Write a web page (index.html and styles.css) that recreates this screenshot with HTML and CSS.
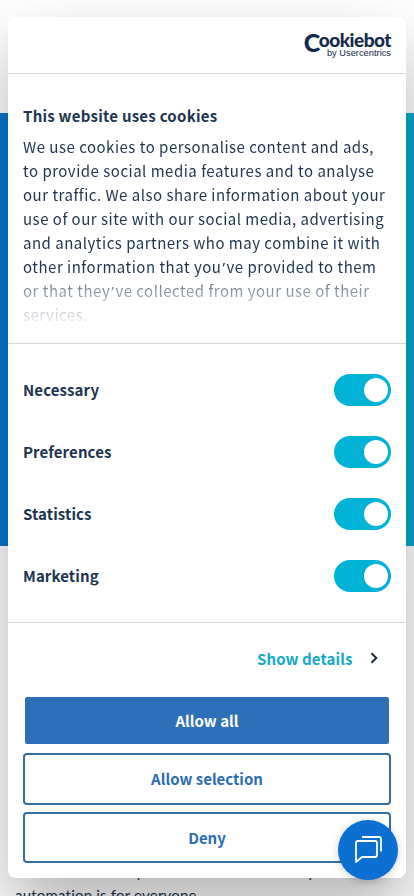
FILE: index.html
```html
<!DOCTYPE html>
<html lang="en">
<head>
<meta charset="utf-8">
<title>Cookie consent</title>
<link rel="stylesheet" href="styles.css">
</head>
<body>
<main class="page">
  <div class="hero"></div>
  <p class="copy">We believe in the products that make it easy<br>automation is for everyone.</p>
</main>
<section class="dialog">
  <header class="head">
    <div class="logo"><div class="brand"><span class="brand-c">C</span><span>ookiebot</span></div><div class="by">by Usercentrics</div></div>
  </header>
  <div class="intro">
    <h2>This website uses cookies</h2>
    <p>We use cookies to personalise content and ads,<br>to provide social media features and to analyse<br>our traffic. We also share information about your<br>use of our site with our social media, advertising<br>and analytics partners who may combine it with<br>other information that you<span class="apos">’</span>ve provided to them<br>or that they<span class="apos">’</span>ve collected from your use of their<br>services.</p>
  </div>
  <div class="options">
    <div class="option"><span>Necessary</span><i class="switch"></i></div>
    <div class="option"><span>Preferences</span><i class="switch"></i></div>
    <div class="option"><span>Statistics</span><i class="switch"></i></div>
    <div class="option"><span>Marketing</span><i class="switch"></i></div>
  </div>
  <div class="details"><a>Show details</a><svg width="8" height="12" viewBox="0 0 8 12"><path d="M1.500 1.200 6.300 6 1.500 10.800" fill="none" stroke="#1b2b3c" stroke-width="2"/></svg></div>
  <div class="buttons">
    <button class="primary">Allow all</button>
    <button>Allow selection</button>
    <button class="deny">Deny</button>
  </div>
</section>
<div class="chat"><svg width="60" height="60" viewBox="0 0 60 60" fill="none" stroke="#fff" stroke-width="1.800" stroke-linejoin="round"><path d="M20 21h17a2 2 0 0 1 2 2v12a2 2 0 0 1-2 2H24l-6 5V23a2 2 0 0 1 2-2z"/><path d="M24 17h17a2 2 0 0 1 2 2v12.500"/></svg></div>
</body>
</html>
```
FILE: styles.css
```css
* { box-sizing: border-box; }
body {
  margin: 0;
  height: 896px;
  overflow: hidden;
  background: #fff;
  color: #141414;
  font-family: "Noto Sans CJK SC", "Noto Sans", sans-serif;
  font-size: 15px;
}
.page { padding-top: 113px; height: 896px; overflow: hidden; }
.hero { height: 433px; background: linear-gradient(90deg, #0976d2 0 50%, #02abd0 50%); }
.copy { margin: 313px 0 0 15px; font: 15px/24px Lato, sans-serif; color: #18304f; white-space: nowrap; letter-spacing: .2px; }
.dialog {
  position: absolute;
  top: 17px;
  left: 8px;
  width: 398px;
  height: 861px;
  background: #fff;
  border-radius: 8px;
  box-shadow: 0 32px 68px rgba(0, 0, 0, .3);
  color: #1c3450;
}
.head { height: 57px; border-bottom: 1px solid #d6d6d6; display: flex; justify-content: flex-end; padding: 12px 15px 0 0; }
.logo { color: #14284a; text-align: right; white-space: nowrap; }
.brand { height: 18px; display: flex; justify-content: flex-end; font: 900 19px/22px Lato, sans-serif; letter-spacing: -.5px; }
.brand-c { font-size: 25px; line-height: 27px; margin-right: -1px; }
.by { font: 9.3px/10px "Liberation Sans", sans-serif; margin-top: 1px; }
.intro { height: 270px; padding: 30px 15px 0; border-bottom: 1px solid #d6d6d6; }
h2 { margin: 0 0 7px; font-size: 15px; line-height: 24px; letter-spacing: .25px; }
.intro p {
  margin: 0;
  line-height: 24px;
  letter-spacing: .5px;
  white-space: nowrap;
  -webkit-mask-image: linear-gradient(#000 0 140px, rgba(0, 0, 0, .55) 154px, rgba(0, 0, 0, .2) 180px, transparent 192px);
  mask-image: linear-gradient(#000 0 140px, rgba(0, 0, 0, .55) 154px, rgba(0, 0, 0, .2) 180px, transparent 192px);
}
.apos { font-family: "Noto Sans", sans-serif; line-height: 1; margin: 0 1px; }
.options { height: 279px; padding-top: 15px; border-bottom: 1px solid #d6d6d6; }
.option { height: 62px; padding: 0 15px; display: flex; align-items: center; justify-content: space-between; font-weight: 700; letter-spacing: .1px; }
.option span { padding-bottom: 2px; }
.switch { width: 57px; height: 32px; border-radius: 16px; background: #00b3d6; padding: 4px 3px; display: flex; justify-content: flex-end; }
.switch::after { content: ""; width: 24px; height: 24px; border-radius: 50%; background: #fff; }
.details { height: 72px; padding: 0 28px 2px 0; display: flex; align-items: center; justify-content: flex-end; gap: 17.5px; color: #14a9c4; font-weight: 700; letter-spacing: .1px; }
.buttons { padding: 0 15px; display: flex; flex-direction: column; gap: 7px; }
button { height: 52px; border: 2px solid #326e9f; border-radius: 4px; background: #fff; color: #2b6db0; font: inherit; font-weight: 700; padding: 0 0 2px; }
button.primary { height: 51px; border-color: transparent; background: #2d70b8; background-clip: padding-box; color: #fff; padding: 0; }
button.deny { height: 51px; padding: 0 0 1px; }
.chat { position: absolute; left: 338px; top: 820px; width: 60px; height: 60px; border-radius: 50%; background: #0b70d1; box-shadow: 0 2px 8px rgba(0, 0, 0, .2); }
.chat svg { display: block; }
```
